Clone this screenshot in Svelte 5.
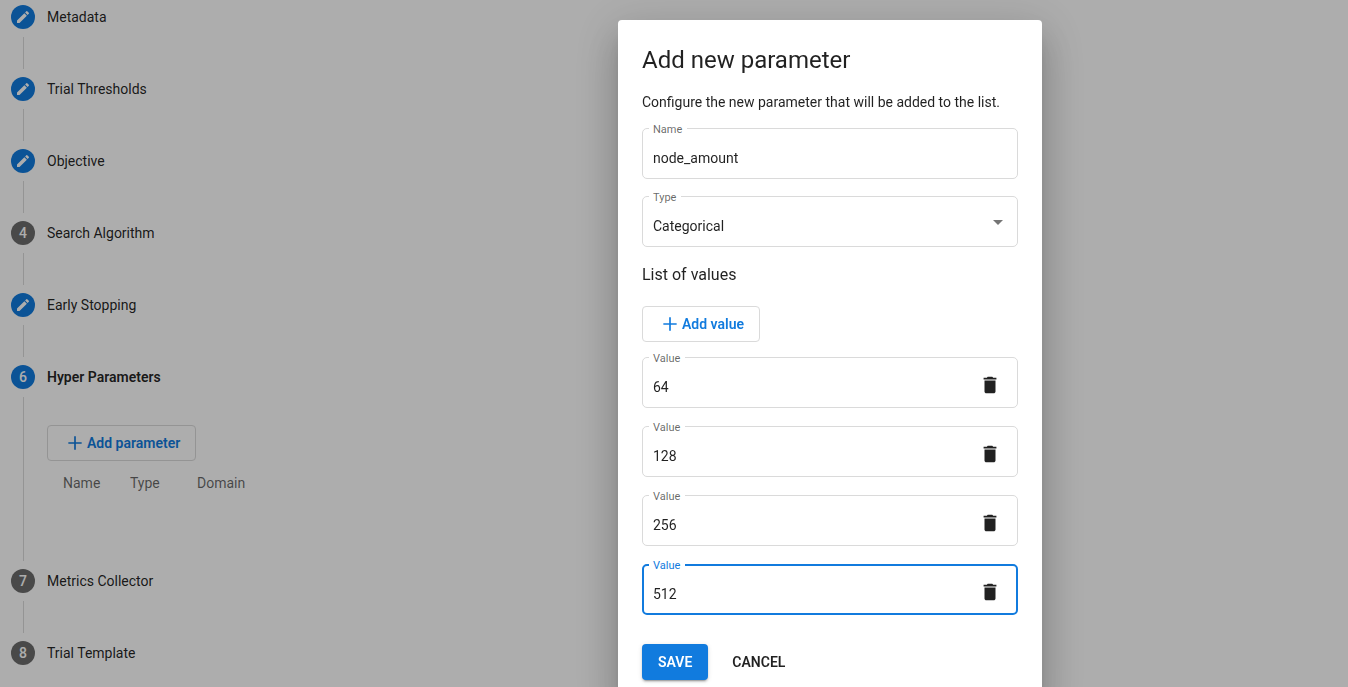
<script lang="ts">
  type Step = { label: string; state: "edit" | "number" | "active" };

  const steps: Step[] = [
    { label: "Metadata", state: "edit" },
    { label: "Trial Thresholds", state: "edit" },
    { label: "Objective", state: "edit" },
    { label: "Search Algorithm", state: "number" },
    { label: "Early Stopping", state: "edit" },
    { label: "Hyper Parameters", state: "active" },
    { label: "Metrics Collector", state: "number" },
    { label: "Trial Template", state: "number" },
  ];

  let name = $state("node_amount");
  let type = $state("Categorical");
  let values = $state(["64", "128", "256", "512"]);
  let focused = $state(3);

  function addValue() {
    values.push("");
    focused = values.length - 1;
  }

  function removeValue(index: number) {
    values.splice(index, 1);
  }
</script>

{#snippet plus()}
  <svg class="plus" viewBox="0 0 24 24" aria-hidden="true">
    <path d="M20 13h-7v7h-2v-7H4v-2h7V4h2v7h7z" />
  </svg>
{/snippet}

<main class="stepper">
  {#each steps as step, i}
    <section class="step">
      <button class="step-header" class:active={step.state === "active"}>
        <span class="step-icon" class:blue={step.state !== "number"}>
          {#if step.state === "edit"}
            <svg viewBox="0 0 24 24" aria-hidden="true">
              <path d="M3 17.25V21h3.75L17.81 9.94l-3.75-3.75L3 17.25zM20.71 7.04a1 1 0 0 0 0-1.41l-2.34-2.34a1 1 0 0 0-1.41 0l-1.83 1.83 3.75 3.75 1.83-1.83z" />
            </svg>
          {:else}
            {i + 1}
          {/if}
        </span>
        <span>{step.label}</span>
      </button>

      {#if i < steps.length - 1}
        <div class="step-body" class:open={step.state === "active"}>
          {#if step.state === "active"}
            <button class="outlined">{@render plus()}Add parameter</button>
            <table>
              <thead>
                <tr>
                  <th>Name</th>
                  <th>Type</th>
                  <th>Domain</th>
                </tr>
              </thead>
            </table>
          {/if}
        </div>
      {/if}
    </section>
  {/each}
</main>

<div class="overlay">
  <div class="dialog" role="dialog" aria-modal="true" aria-labelledby="dialog-title">
    <h2 id="dialog-title">Add new parameter</h2>
    <p class="intro">Configure the new parameter that will be added to the list.</p>

    <div class="fields">
      <div class="field">
        <label for="param-name">Name</label>
        <input id="param-name" type="text" bind:value={name} />
      </div>
      <div class="field">
        <label for="param-type">Type</label>
        <select id="param-type" bind:value={type}>
          <option>Categorical</option>
          <option>Integer</option>
          <option>Double</option>
          <option>Discrete</option>
        </select>
        <span class="arrow"></span>
      </div>
    </div>

    <h3>List of values</h3>
    <button class="outlined" onclick={addValue}>{@render plus()}Add value</button>

    <div class="fields values">
      {#each values as _, i}
        <div class="field" class:focused={focused === i}>
          <label for="value-{i}">Value</label>
          <input id="value-{i}" type="text" bind:value={values[i]} onfocus={() => (focused = i)} />
          <button class="delete" aria-label="Delete value" onclick={() => removeValue(i)}>
            <svg viewBox="0 0 24 24" aria-hidden="true">
              <path d="M6 19c0 1.1.9 2 2 2h8c1.1 0 2-.9 2-2V7H6v12zM19 4h-3.5l-1-1h-5l-1 1H5v2h14V4z" />
            </svg>
          </button>
        </div>
      {/each}
    </div>

    <div class="actions">
      <button class="save">SAVE</button>
      <button class="cancel">CANCEL</button>
    </div>
  </div>
</div>

<style>
  :global(body) {
    margin: 0;
    background: #fff;
    color: rgba(0, 0, 0, 0.87);
    font-family: Roboto, "Liberation Sans", sans-serif;
    font-size: 14px;
    overflow: hidden;
  }

  button,
  input,
  select {
    font: inherit;
    color: inherit;
    border: 0;
    padding: 0;
    background: none;
  }

  button {
    cursor: pointer;
  }

  svg {
    fill: currentColor;
    display: block;
  }

  .stepper {
    padding: 5px 11px;
  }

  .step-header {
    display: flex;
    align-items: center;
    gap: 12px;
    height: 24px;
  }

  .step-header.active {
    font-weight: 600;
  }

  .step-icon {
    display: flex;
    align-items: center;
    justify-content: center;
    width: 24px;
    height: 24px;
    border-radius: 50%;
    background: #6c6c6c;
    color: #fff;
    font-weight: 500;
  }

  .step-icon.blue {
    background: #117bde;
  }

  .step-icon svg {
    width: 16px;
    height: 16px;
  }

  .step-body {
    min-height: 32px;
    margin: 8px 0 8px 12px;
    padding-left: 23px;
    border-left: 1px solid #dadada;
  }

  .step-body.open {
    box-sizing: border-box;
    min-height: 164px;
    padding-top: 28px;
  }

  .outlined {
    display: flex;
    align-items: center;
    gap: 2px;
    height: 36px;
    padding: 0 15px 0 17px;
    border: 1px solid #dadada;
    border-radius: 4px;
    color: #117bde;
    font-weight: 600;
  }

  .plus {
    width: 20px;
    height: 20px;
  }

  table {
    margin: 12px 0 0 16px;
    border-collapse: collapse;
  }

  th {
    min-width: 67px;
    padding: 0;
    text-align: left;
    font-weight: 400;
    line-height: 20px;
    color: rgba(0, 0, 0, 0.6);
  }

  .overlay {
    position: fixed;
    inset: 0;
    display: flex;
    align-items: flex-start;
    justify-content: center;
    padding: 20px 0 0 312px;
    background: rgba(0, 0, 0, 0.32);
    overflow: hidden;
  }

  .dialog {
    box-sizing: border-box;
    width: 424px;
    padding: 24px;
    border-radius: 4px;
    background: #fff;
    box-shadow:
      0 11px 15px -7px rgba(0, 0, 0, 0.2),
      0 24px 38px 3px rgba(0, 0, 0, 0.14),
      0 9px 46px 8px rgba(0, 0, 0, 0.12);
  }

  h2 {
    margin: 0;
    font-size: 24px;
    font-weight: 400;
    line-height: 32px;
  }

  .intro {
    margin: 16px 0;
    line-height: 20px;
  }

  .fields {
    display: grid;
    gap: 17px;
  }

  .fields.values {
    gap: 18px;
    margin-top: 15px;
  }

  .field {
    position: relative;
    display: flex;
    align-items: center;
    box-sizing: border-box;
    height: 51px;
    border: 1px solid #dadada;
    border-radius: 5px;
  }

  .field label {
    position: absolute;
    top: -6px;
    left: 6px;
    padding: 0 5px 0 4px;
    background: #fff;
    color: rgba(0, 0, 0, 0.6);
    font-size: 11px;
    line-height: 14px;
  }

  .field input,
  .field select {
    flex: 1;
    min-width: 0;
    height: 100%;
    box-sizing: border-box;
    padding: 8px 10px 0;
    appearance: none;
    outline: none;
  }

  .field.focused {
    border: 2px solid #117bde;
  }

  .field.focused label {
    top: -7px;
    left: 5px;
    color: #117bde;
  }

  .field.focused input {
    padding-left: 9px;
  }

  .arrow {
    position: absolute;
    top: 23px;
    right: 14px;
    border: 5px solid transparent;
    border-top-color: rgba(0, 0, 0, 0.54);
    border-bottom: 0;
    pointer-events: none;
  }

  .delete {
    padding: 4px 16px 0 0;
  }

  .focused .delete {
    padding-right: 15px;
  }

  .delete svg {
    width: 22px;
    height: 22px;
  }

  h3 {
    margin: 16px 0 19px;
    font-size: 16px;
    font-weight: 400;
    line-height: 24px;
  }

  .actions {
    display: flex;
    gap: 8px;
    margin-top: 29px;
  }

  .actions button {
    height: 36px;
    padding: 0 16px;
    border-radius: 4px;
    font-weight: 600;
  }

  .actions .save {
    background: #117bde;
    color: #fff;
    box-shadow:
      0 3px 1px -2px rgba(0, 0, 0, 0.2),
      0 2px 2px rgba(0, 0, 0, 0.14),
      0 1px 5px rgba(0, 0, 0, 0.12);
  }
</style>
